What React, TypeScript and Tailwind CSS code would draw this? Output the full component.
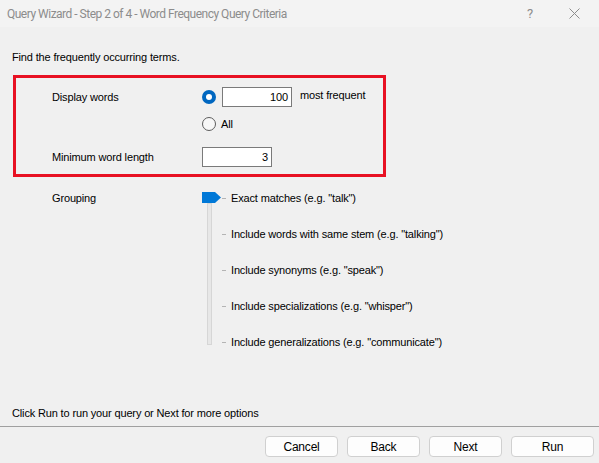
import React from "react";

const groupingOptions = [
  'Exact matches (e.g. "talk")',
  'Include words with same stem (e.g. "talking")',
  'Include synonyms (e.g. "speak")',
  'Include specializations (e.g. "whisper")',
  'Include generalizations (e.g. "communicate")',
];

function Radio({ checked }: { checked: boolean }) {
  return checked ? (
    <span className="flex h-[14px] w-[14px] items-center justify-center rounded-full bg-[#0067c0]">
      <span className="h-[6px] w-[6px] rounded-full bg-white" />
    </span>
  ) : (
    <span className="block h-[14px] w-[14px] rounded-full border border-[#5c5c5c] bg-[#f7f7f7]" />
  );
}

function NumberBox({ value }: { value: string }) {
  return (
    <div className="flex h-[20px] w-[70px] items-center justify-end border border-[#7a7a7a] bg-white pr-[3px] text-black">
      {value}
    </div>
  );
}

function DialogButton({ label, wide }: { label: string; wide?: boolean }) {
  return (
    <button
      className={
        "flex h-[21px] items-center justify-center rounded-[4px] border border-[#d0d0d0] bg-[#fdfdfd] text-[12px] tracking-[-0.2px] text-black " +
        (wide ? "w-[83px]" : "w-[73px]")
      }
    >
      {label}
    </button>
  );
}

function SliderThumb() {
  return (
    <svg width="19" height="11" viewBox="0 0 19 11" className="block">
      <path d="M0 0 H13 L19 5.5 L13 11 H0 Z" fill="#0078d7" />
    </svg>
  );
}

export default function App() {
  return (
    <div className="flex h-[463px] w-[599px] flex-col overflow-hidden bg-[#f0f0f0] font-['Liberation_Sans',Arial,sans-serif] text-[11px] tracking-[-0.15px] text-black">
      {/* title bar */}
      <div className="flex h-[27px] shrink-0 items-center bg-[#f3f3f3] pl-[7px] font-['Roboto',sans-serif] text-[12px] text-[#8c8c8c]">
        <span className="tracking-[-0.5px]">Query Wizard - Step 2 of 4 - Word Frequency Query Criteria</span>
        <span className="ml-auto mr-[36px] text-[13px]">?</span>
        <svg width="11" height="11" viewBox="0 0 11 11" className="mr-[19px]">
          <path d="M0.5 0.5 L10.5 10.5 M10.5 0.5 L0.5 10.5" stroke="#8c8c8c" strokeWidth="1" />
        </svg>
      </div>

      {/* body */}
      <div className="flex flex-1 flex-col">
        <p className="ml-[12px] mt-[23px] h-[14px] leading-[14px]">Find the frequently occurring terms.</p>

        <div className="ml-[13px] mt-[11px] flex h-[102px] w-[373px] flex-col border-[3px] border-[#e81123] pl-[36px] pt-[9px]">
          <div className="flex h-[20px] items-center">
            <span className="w-[150px]">Display words</span>
            <Radio checked />
            <span className="ml-[6px]">
              <NumberBox value="100" />
            </span>
            <span className="ml-[8px] self-start leading-[16px]">most frequent</span>
          </div>
          <div className="mt-[10px] flex h-[14px] items-center">
            <span className="w-[150px]" />
            <Radio checked={false} />
            <span className="ml-[5px]">All</span>
          </div>
          <div className="mt-[16px] flex h-[20px] items-center">
            <span className="w-[150px]">Minimum word length</span>
            <NumberBox value="3" />
          </div>
        </div>

        <div className="ml-[52px] mt-[14px] flex h-[158px]">
          <span className="h-[14px] w-[150px] leading-[14px]">Grouping</span>
          <div className="flex w-[20px] flex-col">
            <div className="mt-[1px]">
              <SliderThumb />
            </div>
            <div className="mb-[4px] ml-[5px] w-[5px] flex-1 border border-[#d6d6d6] bg-[#e7e7e7]" />
          </div>
          <div className="flex flex-col gap-[22px]">
            {groupingOptions.map((opt) => (
              <div key={opt} className="flex h-[14px] items-center">
                <span className="h-px w-[4px] bg-[#b4b4b4]" />
                <span className="ml-[5px] leading-[14px]">{opt}</span>
              </div>
            ))}
          </div>
        </div>

        <p className="ml-[12px] mt-auto mb-[6px] h-[14px] leading-[14px]">Click Run to run your query or Next for more options</p>
      </div>

      <div className="h-px shrink-0 bg-[#a0a0a0]" />
      <div className="flex h-[36px] shrink-0 items-start justify-end gap-[9px] pr-[5px] pt-[9px]">
        <DialogButton label="Cancel" />
        <DialogButton label="Back" />
        <DialogButton label="Next" />
        <DialogButton label="Run" wide />
      </div>
    </div>
  );
}
